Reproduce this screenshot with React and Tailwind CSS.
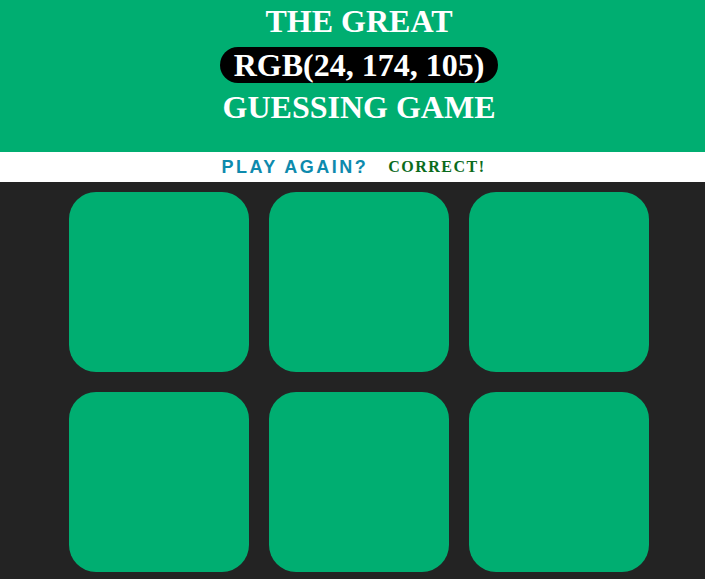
export default function App() {
  const squares = Array.from({ length: 6 });

  return (
    <div className="min-h-[579px] bg-[#232323]">
      <div
        className="bg-[#00ae71] pb-[23px] pl-[13px] text-center text-[32px] font-bold text-white uppercase"
        style={{ fontFamily: '"Liberation Serif", serif' }}
      >
        <div className="h-[43px] leading-[43px]">THE GREAT</div>
        <div className="flex h-[43px] items-center justify-center pt-[1px]">
          <span className="flex h-[36px] items-center rounded-full bg-black px-[14px] leading-[36px]">
            RGB(24, 174, 105)
          </span>
        </div>
        <div className="h-[43px] leading-[43px]">GUESSING GAME</div>
      </div>

      <div className="flex h-[30px] items-center justify-center gap-[20px] bg-white pl-[2px]">
        <button
          className="text-[18px] font-bold tracking-[2.5px] text-[#0e8aad]"
          style={{ fontFamily: '"Liberation Sans", sans-serif' }}
        >
          PLAY AGAIN?
        </button>
        <span
          className="text-[16px] font-bold tracking-[1.5px] text-[#0b6b1c]"
          style={{ fontFamily: '"Liberation Serif", serif' }}
        >
          CORRECT!
        </span>
      </div>

      <div className="ml-[69px] grid w-[580px] grid-cols-3 gap-[20px] pt-[10px]">
        {squares.map((_, i) => (
          <div key={i} className="h-[180px] w-[180px] rounded-[27px] bg-[#00ae71]" />
        ))}
      </div>
    </div>
  );
}
